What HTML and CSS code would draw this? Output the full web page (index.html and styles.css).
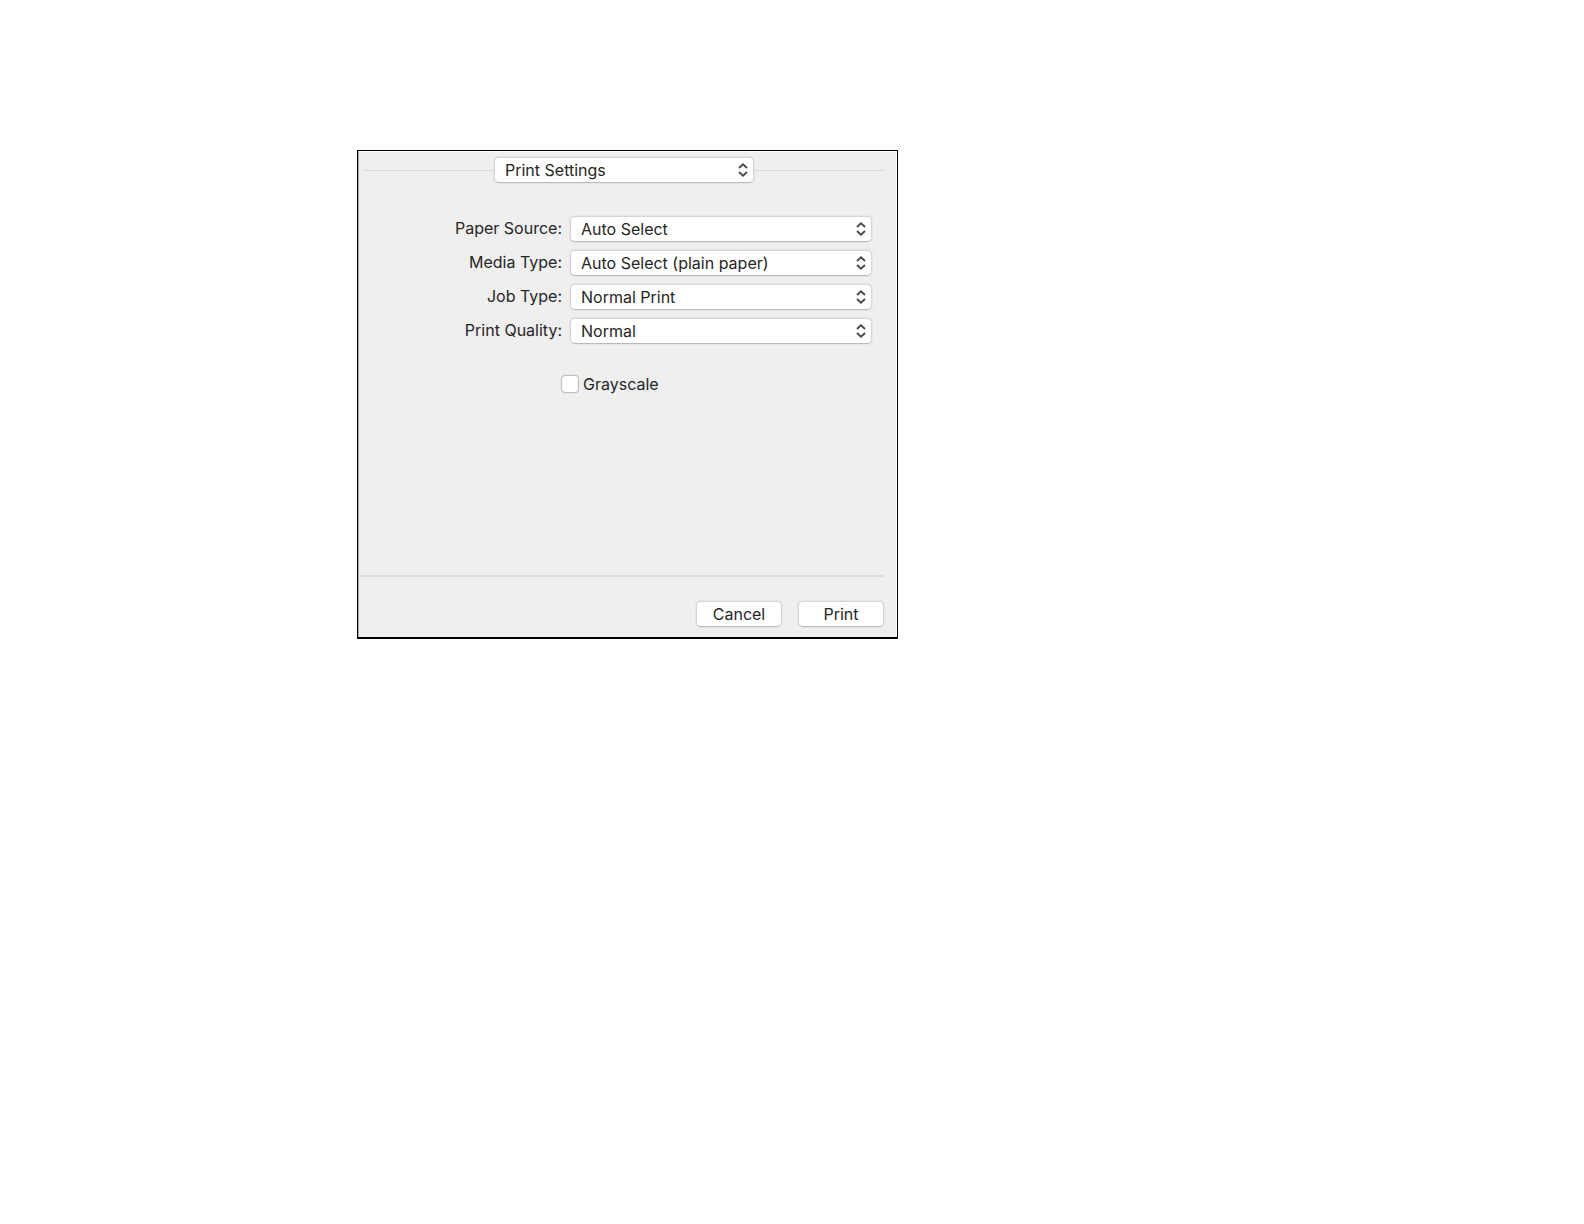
FILE: index.html
```html
<!DOCTYPE html>
<html lang="en">
<head>
<meta charset="utf-8">
<meta name="viewport" content="width=device-width, initial-scale=1">
<title>Print Settings</title>
<link rel="stylesheet" href="styles.css">
</head>
<body>
<svg class="symbols" aria-hidden="true">
  <symbol id="chevrons" viewBox="0 0 10 16">
    <path d="M1 6 5 2.3 9 6M1 10l4 3.7L9 10"/>
  </symbol>
</svg>
<main class="page">
  <form class="dialog">
    <div class="pane-picker">
      <div class="popup popup-pane">
        <select aria-label="Settings pane"><option>Print Settings</option></select>
        <svg class="chevrons" aria-hidden="true"><use href="#chevrons"/></svg>
      </div>
    </div>
    <div class="fields">
      <label for="source">Paper Source:</label>
      <div class="popup">
        <select id="source"><option>Auto Select</option></select>
        <svg class="chevrons" aria-hidden="true"><use href="#chevrons"/></svg>
      </div>
      <label for="media">Media Type:</label>
      <div class="popup">
        <select id="media"><option>Auto Select (plain paper)</option></select>
        <svg class="chevrons" aria-hidden="true"><use href="#chevrons"/></svg>
      </div>
      <label for="job">Job Type:</label>
      <div class="popup">
        <select id="job"><option>Normal Print</option></select>
        <svg class="chevrons" aria-hidden="true"><use href="#chevrons"/></svg>
      </div>
      <label for="quality">Print Quality:</label>
      <div class="popup">
        <select id="quality"><option>Normal</option></select>
        <svg class="chevrons" aria-hidden="true"><use href="#chevrons"/></svg>
      </div>
    </div>
    <div class="option">
      <input type="checkbox" id="grayscale">
      <label for="grayscale">Grayscale</label>
    </div>
    <div class="actions">
      <button type="button">Cancel</button>
      <button type="submit">Print</button>
    </div>
  </form>
</main>
</body>
</html>
```
FILE: styles.css
```css
* {
  box-sizing: border-box;
}

body {
  margin: 0;
  background: #fff;
  color: #262626;
  font: 16px/24px Inter, "Liberation Sans", sans-serif;
}

.symbols {
  position: absolute;
  width: 0;
  height: 0;
}

.page {
  display: grid;
  grid-template-columns: 357fr 541fr 686fr;
  padding: 150px 0;
}

.dialog {
  grid-column: 2;
  display: flex;
  flex-direction: column;
  padding-bottom: 10px;
  border: 1px solid #000;
  border-bottom-width: 2px;
  background: #efefef;
  box-shadow: inset 1px 0 #aaa, inset -1px 0 #fff, inset 0 1px #fff;
}

/* Pane selector set into a horizontal rule */
.pane-picker {
  display: flex;
  align-items: center;
  padding: 6px 12px 0 5px;
}

.pane-picker::before,
.pane-picker::after {
  content: "";
  flex: 1;
  height: 1px;
  background: #dadada;
}

.popup {
  display: grid;
  align-items: center;
}

.popup-pane {
  width: 260px;
}

select,
button {
  height: 26px;
  border: 1px solid #d6d6d6;
  border-bottom-color: #bababa;
  border-radius: 5px;
  background: #fff;
  color: inherit;
  font: inherit;
  box-shadow: 0 0 2px #ccc;
}

select {
  grid-area: 1 / 1;
  width: 100%;
  padding: 0 32px 0 10px;
  appearance: none;
}

.chevrons {
  grid-area: 1 / 1;
  justify-self: end;
  width: 10px;
  height: 16px;
  margin-right: 6px;
  fill: none;
  stroke: #4a4a4a;
  stroke-width: 1.9;
  pointer-events: none;
}

.fields {
  display: grid;
  grid-template-columns: 1fr 302px;
  gap: 8px;
  padding: 33px 25px 0 0;
}

.fields label {
  text-align: right;
}

.option {
  display: flex;
  align-items: center;
  gap: 4px;
  padding: 28px 0 0 203px;
}

input {
  width: 18px;
  height: 18px;
  margin: 0;
  border: 1px solid #bebebe;
  border-radius: 4px;
  background: #fff;
  box-shadow: 0 0 1px #ccc;
  appearance: none;
}

.actions {
  display: flex;
  justify-content: flex-end;
  gap: 16px;
  margin: 179px 13px 0 2px;
  padding-top: 24px;
  border-top: 2px solid #dedede;
}

button {
  width: 86px;
  padding: 0;
}
```
